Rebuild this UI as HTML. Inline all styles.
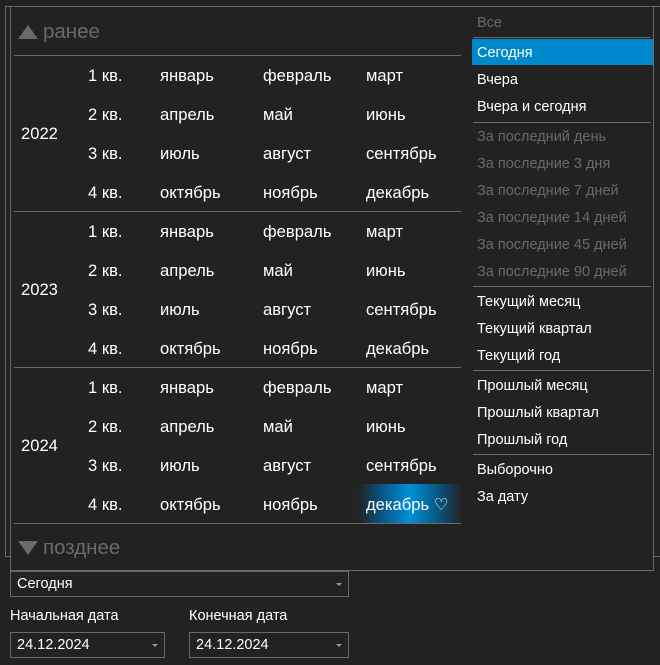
<!DOCTYPE html>
<html><head><meta charset="utf-8"><style>
body{margin:0;width:660px;height:665px;background:#222;overflow:hidden;font-family:"Liberation Sans","DejaVu Sans",sans-serif;color:#fff;position:relative}
div{position:absolute;box-sizing:border-box}
.t{font-size:16.6px;line-height:20px;white-space:nowrap}
.m{font-size:14.5px;line-height:18px;white-space:nowrap;left:477px}
.g{color:#6a6a6a}
.hl{height:1px;background:#6a6a6a}
.cb{border:1px solid #6a6a6a;height:26px;font-size:14.5px;line-height:25px;padding-left:6px}
.ar{position:absolute;right:6px;top:11px;width:0;height:0;border-left:3px solid transparent;border-right:3px solid transparent;border-top:3px solid #999}
</style></head><body>
<div style="left:5px;top:6px;width:660px;height:551px;border:1px solid #6a6a6a"></div>
<div style="left:10px;top:6px;width:644px;height:565px;border:1px solid #6a6a6a;background:#222"></div>
<div style="left:18px;top:25px;width:0;height:0;border-left:10px solid transparent;border-right:10px solid transparent;border-bottom:14px solid #6a6a6a"></div>
<div class="g" style="left:43px;top:19px;font-size:20.5px;line-height:26px">ранее</div>
<div style="left:18px;top:541px;width:0;height:0;border-left:10px solid transparent;border-right:10px solid transparent;border-top:14px solid #6a6a6a"></div>
<div class="g" style="left:43px;top:535px;font-size:20.5px;line-height:26px">позднее</div>
<div class="hl" style="left:14px;top:55px;width:447px"></div>
<div class="hl" style="left:14px;top:211px;width:447px"></div>
<div class="hl" style="left:14px;top:367px;width:447px"></div>
<div class="hl" style="left:14px;top:523px;width:447px"></div>
<div style="left:358px;top:484px;width:104px;height:39px;background:linear-gradient(90deg,#222 0%,#0a4f78 20%,#0090d8 50%,#0a4f78 80%,#222 100%)"></div>
<div class="t" style="left:21px;top:124px">2022</div>
<div class="t" style="left:21px;top:280px">2023</div>
<div class="t" style="left:21px;top:436px">2024</div>
<div class="t" style="left:88px;top:66px">1 кв.</div><div class="t" style="left:160px;top:66px">январь</div><div class="t" style="left:263px;top:66px">февраль</div><div class="t" style="left:366px;top:66px">март</div>
<div class="t" style="left:88px;top:105px">2 кв.</div><div class="t" style="left:160px;top:105px">апрель</div><div class="t" style="left:263px;top:105px">май</div><div class="t" style="left:366px;top:105px">июнь</div>
<div class="t" style="left:88px;top:144px">3 кв.</div><div class="t" style="left:160px;top:144px">июль</div><div class="t" style="left:263px;top:144px">август</div><div class="t" style="left:366px;top:144px">сентябрь</div>
<div class="t" style="left:88px;top:183px">4 кв.</div><div class="t" style="left:160px;top:183px">октябрь</div><div class="t" style="left:263px;top:183px">ноябрь</div><div class="t" style="left:366px;top:183px">декабрь</div>
<div class="t" style="left:88px;top:222px">1 кв.</div><div class="t" style="left:160px;top:222px">январь</div><div class="t" style="left:263px;top:222px">февраль</div><div class="t" style="left:366px;top:222px">март</div>
<div class="t" style="left:88px;top:261px">2 кв.</div><div class="t" style="left:160px;top:261px">апрель</div><div class="t" style="left:263px;top:261px">май</div><div class="t" style="left:366px;top:261px">июнь</div>
<div class="t" style="left:88px;top:300px">3 кв.</div><div class="t" style="left:160px;top:300px">июль</div><div class="t" style="left:263px;top:300px">август</div><div class="t" style="left:366px;top:300px">сентябрь</div>
<div class="t" style="left:88px;top:339px">4 кв.</div><div class="t" style="left:160px;top:339px">октябрь</div><div class="t" style="left:263px;top:339px">ноябрь</div><div class="t" style="left:366px;top:339px">декабрь</div>
<div class="t" style="left:88px;top:378px">1 кв.</div><div class="t" style="left:160px;top:378px">январь</div><div class="t" style="left:263px;top:378px">февраль</div><div class="t" style="left:366px;top:378px">март</div>
<div class="t" style="left:88px;top:417px">2 кв.</div><div class="t" style="left:160px;top:417px">апрель</div><div class="t" style="left:263px;top:417px">май</div><div class="t" style="left:366px;top:417px">июнь</div>
<div class="t" style="left:88px;top:456px">3 кв.</div><div class="t" style="left:160px;top:456px">июль</div><div class="t" style="left:263px;top:456px">август</div><div class="t" style="left:366px;top:456px">сентябрь</div>
<div class="t" style="left:88px;top:495px">4 кв.</div><div class="t" style="left:160px;top:495px">октябрь</div><div class="t" style="left:263px;top:495px">ноябрь</div><div class="t" style="left:366px;top:495px">декабрь ♡</div>

<div style="left:472px;top:39px;width:181px;height:26px;background:#0088cc"></div>
<div class="hl" style="left:473px;top:37px;width:178px"></div>
<div class="hl" style="left:473px;top:122px;width:178px"></div>
<div class="hl" style="left:473px;top:286px;width:178px"></div>
<div class="hl" style="left:473px;top:370px;width:178px"></div>
<div class="hl" style="left:473px;top:454px;width:178px"></div>
<div class="m g" style="top:14px">Все</div>
<div class="m" style="top:44px">Сегодня</div>
<div class="m" style="top:71px">Вчера</div>
<div class="m" style="top:98px">Вчера и сегодня</div>
<div class="m g" style="top:128px">За последний день</div>
<div class="m g" style="top:155px">За последние 3 дня</div>
<div class="m g" style="top:182px">За последние 7 дней</div>
<div class="m g" style="top:209px">За последние 14 дней</div>
<div class="m g" style="top:236px">За последние 45 дней</div>
<div class="m g" style="top:263px">За последние 90 дней</div>
<div class="m" style="top:293px">Текущий месяц</div>
<div class="m" style="top:320px">Текущий квартал</div>
<div class="m" style="top:347px">Текущий год</div>
<div class="m" style="top:377px">Прошлый месяц</div>
<div class="m" style="top:404px">Прошлый квартал</div>
<div class="m" style="top:431px">Прошлый год</div>
<div class="m" style="top:461px">Выборочно</div>
<div class="m" style="top:488px">За дату</div>

<div class="cb" style="left:10px;top:571px;width:339px">Сегодня<span class="ar"></span></div>
<div style="left:10px;top:607px;font-size:14.5px;line-height:18px">Начальная дата</div>
<div style="left:189px;top:607px;font-size:14.5px;line-height:18px">Конечная дата</div>
<div class="cb" style="left:10px;top:632px;width:155px">24.12.2024<span class="ar"></span></div>
<div class="cb" style="left:189px;top:632px;width:160px">24.12.2024<span class="ar"></span></div>
</body></html>
